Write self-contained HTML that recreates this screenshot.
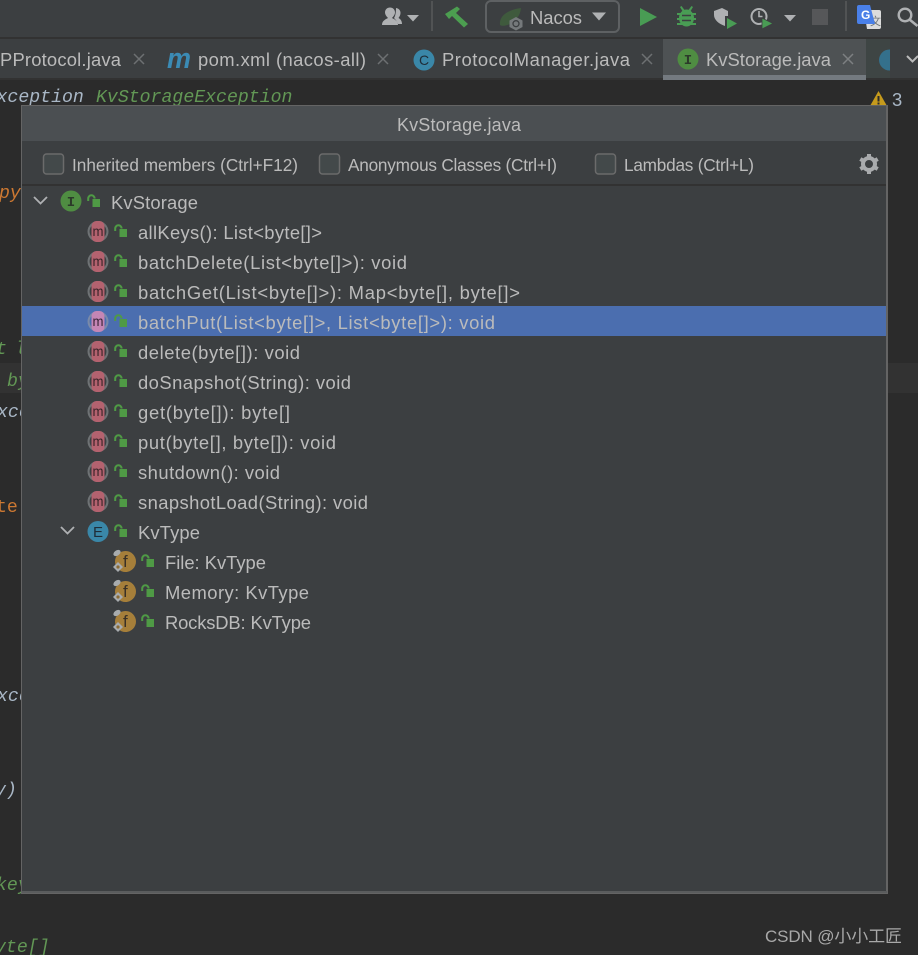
<!DOCTYPE html>
<html><head><meta charset="utf-8"><title>KvStorage.java</title>
<style>
html,body{margin:0;padding:0;background:#2b2b2b;width:918px;height:955px;overflow:hidden}
svg{display:block;position:absolute;left:0;top:0}
text{font-family:"Liberation Sans","Noto Sans CJK SC",sans-serif;font-size:18.4px;fill:#bbbbbb}
.c{font-family:"Liberation Mono",monospace;font-style:italic;font-size:18.2px;stroke-width:.25px}
.s{font-size:17.2px}
</style></head><body>
<svg width="918" height="955" viewBox="0 0 918 955" xmlns="http://www.w3.org/2000/svg">
<defs>
<clipPath id="tabclip"><rect x="866" y="39" width="24" height="39"/></clipPath>
<g id="lock"><path d="M-11.800 -1V-3.500a3.200 3.200 0 0 1 6.400 0" fill="none" stroke="#4f9a45" stroke-width="2"/><rect x="-7.500" y="-3" width="7.500" height="8" fill="#4f9a45"/></g>
<g id="m"><circle r="10.500" fill="#6e7274"/><circle r="8.400" fill="#3c3f41"/><rect x="-6.500" y="-10.500" width="13" height="21" rx="5" fill="#b4626f"/><text x="-5.500" y="4.500" textLength="11" lengthAdjust="spacingAndGlyphs" style="font-size:14px;fill:#3a2429">m</text></g>
<g id="ms"><circle r="10.500" fill="#7a8aa8"/><circle r="8.400" fill="#4b6eaf"/><rect x="-6.500" y="-10.500" width="13" height="21" rx="5" fill="#c586b5"/><text x="-5.500" y="4.500" textLength="11" lengthAdjust="spacingAndGlyphs" style="font-size:14px;fill:#3a2438">m</text></g>
<g id="f"><circle cx="1.500" cy=".500" r="10.500" fill="#a67f3a"/><text x="-1" y="6" style="font-size:17px;fill:#3a3126">f</text><ellipse cx="-7" cy="-8" rx="4" ry="2.600" transform="rotate(-35 -7 -8)" fill="#a8acae"/><path d="M-6 1l5 5-5 5-5-5z" fill="#a8acae"/><circle cx="-6" cy="6" r="1.600" fill="#8a6a34"/></g>
</defs>

<rect width="918" height="955" fill="#2b2b2b"/>
<!-- toolbar -->
<rect width="918" height="37" fill="#3c3f41"/>
<rect y="37" width="918" height="2" fill="#323232"/>
<path d="M396 8c3 .500 4.500 2.500 4.500 5 0 2-1 3.500-2 5 2 1 3.500 3 3.500 6h-4c-1-3-3-5-4-6 1.500-2 2-6 2-10z" fill="#afb1b3"/>
<path d="M382 25c0-4 3-5.500 6-7-1.800-2-3-3.500-3-5.500 0-3 2.200-5 5-5s5 2 5 5c0 2-1.200 3.500-3 5.500 3 1.500 6 3 6 7z" fill="#afb1b3"/>
<path d="M407 15h12l-6 6.500z" fill="#afb1b3"/>
<rect x="431" y="1" width="2" height="30" fill="#515354"/>
<path d="M445 14L457 6.500L460 9L456 13L468 24L464 27.500L452 16L449 19z" fill="#4c9e50"/>
<rect x="486" y="1" width="133" height="31" rx="5" fill="#3c3f41" stroke="#5e6163" stroke-width="2"/>
<path d="M500 25c-1-9 7-15 21-17-1 8-4 10-7 13-4 4-11 6-14 4z" fill="#3f5a3d"/>
<path d="M516 17l6.500 3.500v6.500l-6.500 3.500-6.500-3.500v-6.500z" fill="#75797b"/>
<circle cx="516" cy="23.700" r="3" fill="none" stroke="#3c3f41" stroke-width="1.300"/>
<text x="530" y="24" textLength="52" lengthAdjust="spacing">Nacos</text>
<path d="M592 12.500h14l-7 8z" fill="#afb1b3"/>
<path d="M640 8l17 9-17 9z" fill="#499c54"/>
<g fill="#499c54"><ellipse cx="686.500" cy="18" rx="7.500" ry="8.500"/><path d="M677 13h19v2h-19zM677 18h19v2h-19zM677 23h19v2h-19zM680 7l1.500-1 3 4h4l3-4 1.500 1-3 5h-7z"/></g>
<path d="M682 15.500h9M682 20.500h9" stroke="#3c3f41" stroke-width="1.500"/>
<path d="M714 11l8-3 6 3v5h-3v10c-6-2-11-6-11-11z" fill="#afb1b3"/>
<path d="M727 18l10 5.500-10 5.500z" fill="#499c54"/>
<circle cx="759" cy="16.500" r="7.500" fill="none" stroke="#afb1b3" stroke-width="2"/>
<path d="M759 11v5.500h3.500" fill="none" stroke="#afb1b3" stroke-width="1.600"/>
<path d="M762 18l11 5.500-11 5.500z" fill="#499c54" stroke="#3c3f41" stroke-width=".8"/>
<path d="M784 15h12l-6 6.500z" fill="#afb1b3"/>
<rect x="812" y="9" width="16" height="16" fill="#565759"/>
<rect x="845" y="1" width="2" height="30" fill="#515354"/>
<path d="M864 10h15a2 2 0 0 1 2 2v15a2 2 0 0 1-2 2h-12z" fill="#dcdcdc"/>
<text x="870" y="25" style="font-size:11px;fill:#6f7578">文</text>
<path d="M859 5h11l5 19h-16a2 2 0 0 1-2-2V7a2 2 0 0 1 2-2z" fill="#4a80e8"/>
<text x="861" y="19" style="font-size:12px;font-weight:bold;fill:#ffffff">G</text>
<circle cx="905" cy="15" r="6.300" fill="none" stroke="#afb1b3" stroke-width="2.400"/>
<path d="M909.500 19.500l8 6.500" stroke="#afb1b3" stroke-width="2.600"/>

<!-- tabs -->
<rect y="39" width="918" height="40" fill="#3c3f41"/>
<rect y="78" width="918" height="2" fill="#323232"/>
<text x="0" y="66" textLength="121" lengthAdjust="spacing">PProtocol.java</text>
<path d="M134 54l10 10M144 54l-10 10M378 54l10 10M388 54l-10 10M642 54l10 10M652 54l-10 10" stroke="#6d7072" stroke-width="1.500"/>
<text x="167" y="68" style="font-size:29px;font-weight:bold;font-style:italic;fill:#3b8bb5" textLength="24" lengthAdjust="spacingAndGlyphs">m</text>
<text x="198" y="66" textLength="168" lengthAdjust="spacing">pom.xml (nacos-all)</text>
<circle cx="424" cy="60" r="10.500" fill="#3a87a8"/>
<text x="419" y="65" style="font-size:14px;fill:#1f2d38">C</text>
<text x="442" y="66" textLength="188" lengthAdjust="spacing">ProtocolManager.java</text>
<rect x="663" y="39" width="203" height="36" fill="#4e5254"/>
<rect x="663" y="75" width="203" height="5" fill="#747a80"/>
<circle cx="688" cy="59" r="10.500" fill="#4f8d42"/>
<text x="683.800" y="64" style="font-size:14px;font-family:'Liberation Mono',monospace;font-weight:bold;fill:#2c3a2a">I</text>
<text x="706" y="66" textLength="125" lengthAdjust="spacing">KvStorage.java</text>
<path d="M843 54l10 10M853 54l-10 10" stroke="#7d8082" stroke-width="1.500"/>
<rect x="866" y="39" width="24" height="39" fill="#3e4544"/>
<circle cx="889.500" cy="60" r="10.500" fill="#34708c" clip-path="url(#tabclip)"/>
<path d="M907 56l5.500 5.500 5.500-5.500" fill="none" stroke="#bbbbbb" stroke-width="2"/>

<!-- editor -->
<rect y="363" width="918" height="30" fill="#323232"/>
<text class="c" x="-3.500" y="102" style="fill:#a9b7c6">xception</text>
<text class="c" x="96" y="102" style="fill:#629755">KvStorageException</text>
<path d="M878.500 91l8.500 15h-17z" fill="#c59a1c"/>
<rect x="877.500" y="96" width="2" height="5.500" fill="#2b2b2b"/><rect x="877.500" y="102.500" width="2" height="2" fill="#2b2b2b"/>
<text x="892" y="106" style="fill:#a9b7c6">3</text>
<text class="c" x="-1" y="198" style="fill:#cc7832">py</text>
<text class="c" x="-4" y="354" style="fill:#629755">t</text>
<text class="c" x="15" y="354" style="fill:#629755">l</text>
<text class="c" x="7" y="386" style="fill:#629755">by</text>
<text class="c" x="-3" y="417" style="fill:#a9b7c6">xce</text>
<text class="c" x="-4" y="512" style="fill:#cc7832;font-style:normal">te</text>
<text class="c" x="-3" y="701" style="fill:#a9b7c6">xce</text>
<text class="c" x="-5" y="795" style="fill:#a9b7c6">y)</text>
<text class="c" x="-4" y="890" style="fill:#629755">key</text>
<text class="c" x="-5" y="952" style="fill:#629755">yte[]</text>

<!-- popup -->
<rect x="21" y="105" width="867" height="789" fill="#646464"/>
<rect x="22" y="106" width="864" height="785" fill="#3c3f41"/>
<rect x="22" y="106" width="864" height="35" fill="#4b4f52"/>
<text x="397" y="131" textLength="124" lengthAdjust="spacing" style="font-size:18px">KvStorage.java</text>
<rect x="22" y="184" width="864" height="2" fill="#323232"/>
<g fill="#43494a" stroke="#6b6b6b" stroke-width="1.500">
<rect x="43.500" y="154" width="20" height="20" rx="3"/>
<rect x="319.500" y="154" width="20" height="20" rx="3"/>
<rect x="595.500" y="154" width="20" height="20" rx="3"/>
</g>
<text class="s" x="72" y="171" textLength="226" lengthAdjust="spacing">Inherited members (Ctrl+F12)</text>
<text class="s" x="348" y="171" textLength="209" lengthAdjust="spacing">Anonymous Classes (Ctrl+I)</text>
<text class="s" x="624" y="171" textLength="130" lengthAdjust="spacing">Lambdas (Ctrl+L)</text>
<g transform="translate(869 164)">
<circle r="6" fill="none" stroke="#a9abad" stroke-width="4"/>
<g stroke="#a9abad" stroke-width="4"><path d="M0-10V-6M0 10V6M8.700-5L5.200-3M-8.700 5L-5.200 3M8.700 5L5.200 3M-8.700-5L-5.200-3"/></g>
</g>

<rect x="22" y="306" width="864" height="30" fill="#4b6eaf"/>

<path d="M34 197l6.500 6.500 6.500-6.500M61 527l6.500 6.500 6.500-6.500" fill="none" stroke="#afb1b3" stroke-width="1.800"/>
<circle cx="71" cy="201" r="10.500" fill="#4f8d42"/>
<text x="66.800" y="206" style="font-size:14px;font-family:'Liberation Mono',monospace;font-weight:bold;fill:#2c3a2a">I</text>
<use href="#lock" x="100" y="202"/>
<text x="111" y="209" textLength="87" lengthAdjust="spacing">KvStorage</text>

<use href="#m" x="98" y="231.500"/><use href="#lock" x="127" y="232"/>
<text x="138" y="239" textLength="184" lengthAdjust="spacing">allKeys(): List&lt;byte[]&gt;</text>
<use href="#m" x="98" y="261.500"/><use href="#lock" x="127" y="262"/>
<text x="138" y="269" textLength="269" lengthAdjust="spacing">batchDelete(List&lt;byte[]&gt;): void</text>
<use href="#m" x="98" y="291.500"/><use href="#lock" x="127" y="292"/>
<text x="138" y="299" textLength="382" lengthAdjust="spacing">batchGet(List&lt;byte[]&gt;): Map&lt;byte[], byte[]&gt;</text>
<use href="#ms" x="98" y="321.500"/><use href="#lock" x="127" y="322"/>
<text x="138" y="329" textLength="357" lengthAdjust="spacing">batchPut(List&lt;byte[]&gt;, List&lt;byte[]&gt;): void</text>
<use href="#m" x="98" y="351.500"/><use href="#lock" x="127" y="352"/>
<text x="138" y="359" textLength="162" lengthAdjust="spacing">delete(byte[]): void</text>
<use href="#m" x="98" y="381.500"/><use href="#lock" x="127" y="382"/>
<text x="138" y="389" textLength="213" lengthAdjust="spacing">doSnapshot(String): void</text>
<use href="#m" x="98" y="411.500"/><use href="#lock" x="127" y="412"/>
<text x="138" y="419" textLength="152" lengthAdjust="spacing">get(byte[]): byte[]</text>
<use href="#m" x="98" y="441.500"/><use href="#lock" x="127" y="442"/>
<text x="138" y="449" textLength="198" lengthAdjust="spacing">put(byte[], byte[]): void</text>
<use href="#m" x="98" y="471.500"/><use href="#lock" x="127" y="472"/>
<text x="138" y="479" textLength="142" lengthAdjust="spacing">shutdown(): void</text>
<use href="#m" x="98" y="501.500"/><use href="#lock" x="127" y="502"/>
<text x="138" y="509" textLength="230" lengthAdjust="spacing">snapshotLoad(String): void</text>

<circle cx="98" cy="531.500" r="10.500" fill="#3a87a8"/>
<text x="93" y="537" style="font-size:15px;fill:#1f2d38">E</text>
<use href="#lock" x="127" y="532"/>
<text x="138" y="539" textLength="62" lengthAdjust="spacing">KvType</text>

<use href="#f" x="124" y="561"/><use href="#lock" x="154" y="562"/>
<text x="165" y="569" textLength="101" lengthAdjust="spacing">File: KvType</text>
<use href="#f" x="124" y="591"/><use href="#lock" x="154" y="592"/>
<text x="165" y="599" textLength="144" lengthAdjust="spacing">Memory: KvType</text>
<use href="#f" x="124" y="621"/><use href="#lock" x="154" y="622"/>
<text x="165" y="629" textLength="146" lengthAdjust="spacing">RocksDB: KvType</text>

<rect x="22" y="891" width="865" height="2" fill="#5a5c5d"/>

<text x="765" y="942" textLength="137" lengthAdjust="spacing" style="font-size:17px;fill:#a8a8a8">CSDN @小小工匠</text>
</svg>
</body></html>
